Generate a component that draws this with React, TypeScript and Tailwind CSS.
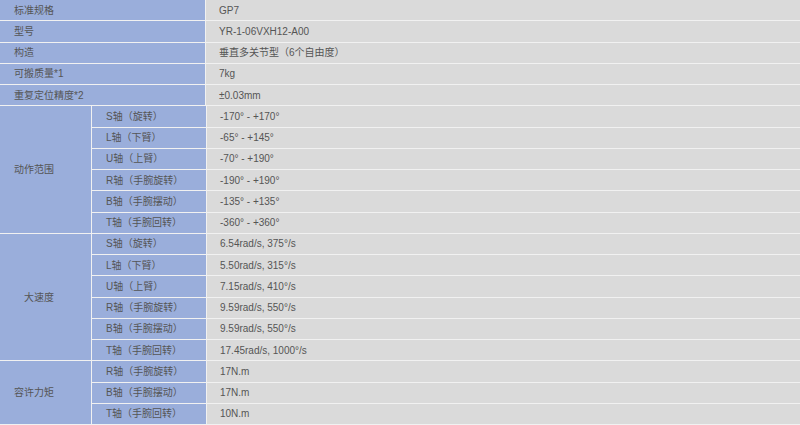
const header: [string, string][] = [
  ['标准规格', 'GP7'],
  ['型号', 'YR-1-06VXH12-A00'],
  ['构造', '垂直多关节型（6个自由度）'],
  ['可搬质量*1', '7kg'],
  ['重复定位精度*2', '±0.03mm'],
]

const groups: { label: string; rows: [string, string][] }[] = [
  {
    label: '动作范围',
    rows: [
      ['S轴（旋转）', '-170° - +170°'],
      ['L轴（下臂）', '-65° - +145°'],
      ['U轴（上臂）', '-70° - +190°'],
      ['R轴（手腕旋转）', '-190° - +190°'],
      ['B轴（手腕摆动）', '-135° - +135°'],
      ['T轴（手腕回转）', '-360° - +360°'],
    ],
  },
  {
    label: '大速度',
    rows: [
      ['S轴（旋转）', '6.54rad/s, 375°/s'],
      ['L轴（下臂）', '5.50rad/s, 315°/s'],
      ['U轴（上臂）', '7.15rad/s, 410°/s'],
      ['R轴（手腕旋转）', '9.59rad/s, 550°/s'],
      ['B轴（手腕摆动）', '9.59rad/s, 550°/s'],
      ['T轴（手腕回转）', '17.45rad/s, 1000°/s'],
    ],
  },
  {
    label: '容许力矩',
    rows: [
      ['R轴（手腕旋转）', '17N.m'],
      ['B轴（手腕摆动）', '17N.m'],
      ['T轴（手腕回转）', '10N.m'],
    ],
  },
]

export default function App() {
  return (
    <div className="w-[800px] h-[425px] overflow-hidden bg-[#dadada] text-[10px] text-[#555] font-['Liberation_Sans','Noto_Sans_CJK_SC',sans-serif]">
      {header.map(([k, v]) => (
        <div key={k} className="flex h-[21.26px] border-b border-[#f1f1f1]">
          <div className="w-[206px] shrink-0 bg-[#9aaedb] border-r border-[#f1f1f1] pl-[14px] flex items-center">
            {k}
          </div>
          <div className="flex-1 pl-[13px] flex items-center">{v}</div>
        </div>
      ))}
      {groups.map((g) => (
        <div key={g.label} className="flex">
          <div className="w-[92px] shrink-0 bg-[#9aaedb] border-r border-b border-[#f1f1f1] flex items-center">
            <span className="ml-[14px] w-[40px] text-right">{g.label}</span>
          </div>
          <div className="flex-1">
            {g.rows.map(([k, v]) => (
              <div key={k} className="flex h-[21.26px] border-b border-[#f1f1f1]">
                <div className="w-[115px] shrink-0 bg-[#9aaedb] border-r border-[#f1f1f1] pl-[14px] flex items-center">
                  {k}
                </div>
                <div className="flex-1 pl-[13px] flex items-center">{v}</div>
              </div>
            ))}
          </div>
        </div>
      ))}
    </div>
  )
}
